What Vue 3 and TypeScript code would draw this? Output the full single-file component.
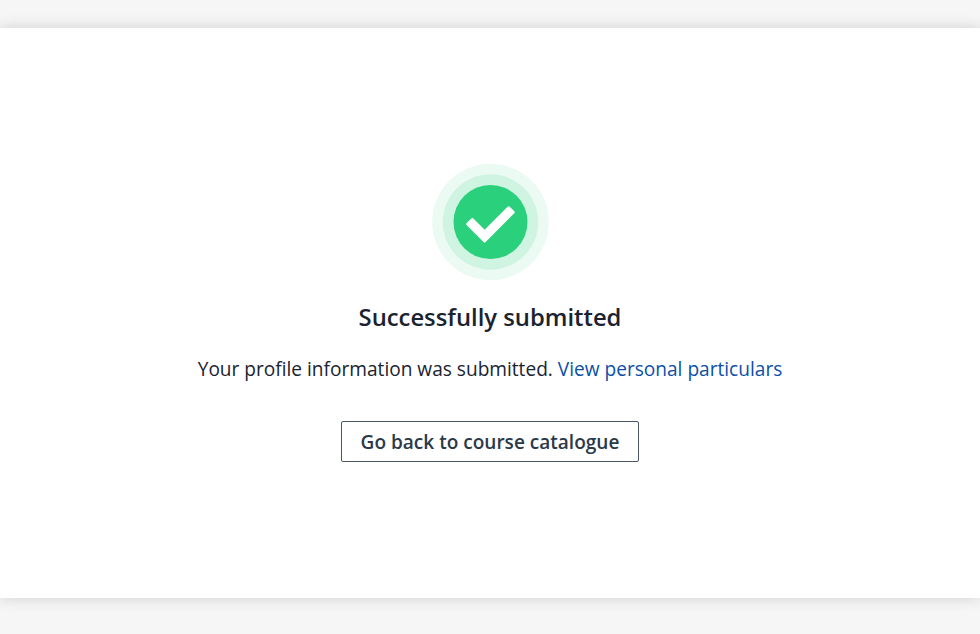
<script setup lang="ts">
const title: string = 'Successfully submitted'
</script>

<template>
  <div class="page">
    <main class="card">
      <svg class="icon" width="118" height="118" viewBox="0 0 118 118" aria-hidden="true">
        <circle cx="59.500" cy="59" r="58.300" fill="#ebfaf3" />
        <circle cx="59.500" cy="59" r="47.700" fill="#cff4e1" />
        <circle cx="59.500" cy="59" r="37" fill="#2ad07b" />
        <polygon points="41.300,56.600 53.600,68.900 77.700,44.800 82.200,49.300 53.600,77.900 36.800,61.150" fill="#fff" stroke="#fff" stroke-width="3" stroke-linejoin="round" />
      </svg>
      <h1 class="title">{{ title }}</h1>
      <p class="text">Your profile information was submitted. <a class="link" href="#">View personal particulars</a></p>
      <button class="btn" type="button">Go back to course catalogue</button>
    </main>
  </div>
</template>

<style scoped>
.page {
  height: 634px;
  box-sizing: border-box;
  padding: 28px 0 36px;
  background: #f6f6f6;
  overflow: hidden;
  font-family: "Open Sans", sans-serif;
}
.card {
  height: 570px;
  box-sizing: border-box;
  padding-bottom: 1px;
  background: #fff;
  box-shadow: 0 0 14px rgba(0, 0, 0, 0.16);
  display: flex;
  flex-direction: column;
  align-items: center;
  justify-content: center;
}
.icon {
  display: block;
}
.title {
  margin: 18px 0 0;
  font-size: 23.800px;
  line-height: 36px;
  font-weight: 600;
  color: #1a2330;
}
.text {
  margin: 18.500px 0 0;
  font-size: 19.100px;
  line-height: 30px;
  color: #1a2330;
}
.link {
  color: #0b4fa8;
  text-decoration: none;
}
.btn {
  margin-top: 37.500px;
  width: 298px;
  height: 41px;
  box-sizing: border-box;
  padding: 0;
  border: 1px solid #4a5666;
  border-radius: 2px;
  background: #fff;
  color: #2b3949;
  font-family: inherit;
  font-size: 19.050px;
  font-weight: 600;
}
</style>
